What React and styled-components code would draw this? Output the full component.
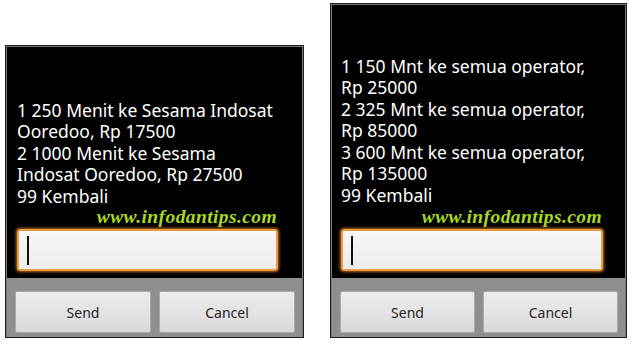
import React from "react";
import styled, { createGlobalStyle } from "styled-components";

const Global = createGlobalStyle`
  html, body { margin: 0; padding: 0; background: #ffffff; }
  body { width: 632px; height: 347px; overflow: hidden; }
  *, *::before, *::after { box-sizing: border-box; }
`;

const Page = styled.div`
  display: flex;
  align-items: flex-end;
  gap: 26px;
  height: 338px;
  padding-left: 5px;
`;

const Dialog = styled.div`
  width: ${(p) => p.$w}px;
  border: 1px solid #1e1e1e;
  background: #8e8e8e;
  display: flex;
  flex-direction: column;
`;

const Body = styled.div`
  background: #000;
  border: 1px solid #7a7a7a;
  border-bottom: none;
  padding: ${(p) => p.$top}px ${(p) => p.$pr}px 7px ${(p) => p.$pl}px;
  display: flex;
  flex-direction: column;
`;

const Message = styled.div`
  font-family: "Noto Sans", "Open Sans", sans-serif;
  font-size: 17.5px;
  line-height: 21.5px;
  color: #ffffff;
  white-space: pre;
`;

const Watermark = styled.div`
  align-self: flex-end;
  margin-right: 1px;
  font-family: "Liberation Serif", "DejaVu Serif", serif;
  font-weight: bold;
  font-style: italic;
  font-size: 19.5px;
  line-height: 20px;
  color: #a8d91e;
  letter-spacing: 0.4px;
  margin-top: ${(p) => p.$mt}px;
`;

const Input = styled.div`
  margin-top: 2px;
  height: 42px;
  border-radius: 3px;
  border: 2px solid #eb9a3c;
  box-shadow: 0 0 3px 1px #b86a1e, inset 0 0 2px #fff;
  background: linear-gradient(#f7f7f7, #ececec);
  display: flex;
  align-items: center;
  padding-left: 8px;
`;

const Caret = styled.div`
  width: 1.5px;
  height: 29px;
  background: #111;
`;

const ButtonBar = styled.div`
  display: flex;
  gap: 8px;
  padding: 13px 7px 4px 8px;
  border-left: 1px solid #7a7a7a;
  border-right: 1px solid #7a7a7a;
`;

const Button = styled.div`
  flex: 1;
  height: 42px;
  border: 1px solid #a9a9a9;
  border-radius: 2px;
  background: linear-gradient(#ececec, #d9d9d9);
  display: flex;
  align-items: center;
  justify-content: center;
  font-family: "Noto Sans", "Open Sans", sans-serif;
  font-size: 14px;
  color: #262626;
`;

const Phone = ({ w, top, pl, pr, text, wmTop }) => (
  <Dialog $w={w}>
    <Body $top={top} $pl={pl} $pr={pr}>
      <Message>{text}</Message>
      <Watermark $mt={wmTop}>www.infodantips.com</Watermark>
      <Input>
        <Caret />
      </Input>
    </Body>
    <ButtonBar>
      <Button>Send</Button>
      <Button>Cancel</Button>
    </ButtonBar>
  </Dialog>
);

export default function App() {
  return (
    <>
      <Global />
      <Page>
        <Phone
          w={299}
          top={53}
          pl={10}
          pr={24}
          wmTop={0}
          text={"1 250 Menit ke Sesama Indosat\nOoredoo, Rp 17500\n2 1000 Menit ke Sesama\nIndosat Ooredoo, Rp 27500\n99 Kembali"}
        />
        <Phone
          w={297}
          top={51}
          pl={9}
          pr={22}
          wmTop={1}
          text={"1 150 Mnt ke semua operator,\nRp 25000\n2 325 Mnt ke semua operator,\nRp 85000\n3 600 Mnt ke semua operator,\nRp 135000\n99 Kembali"}
        />
      </Page>
    </>
  );
}
